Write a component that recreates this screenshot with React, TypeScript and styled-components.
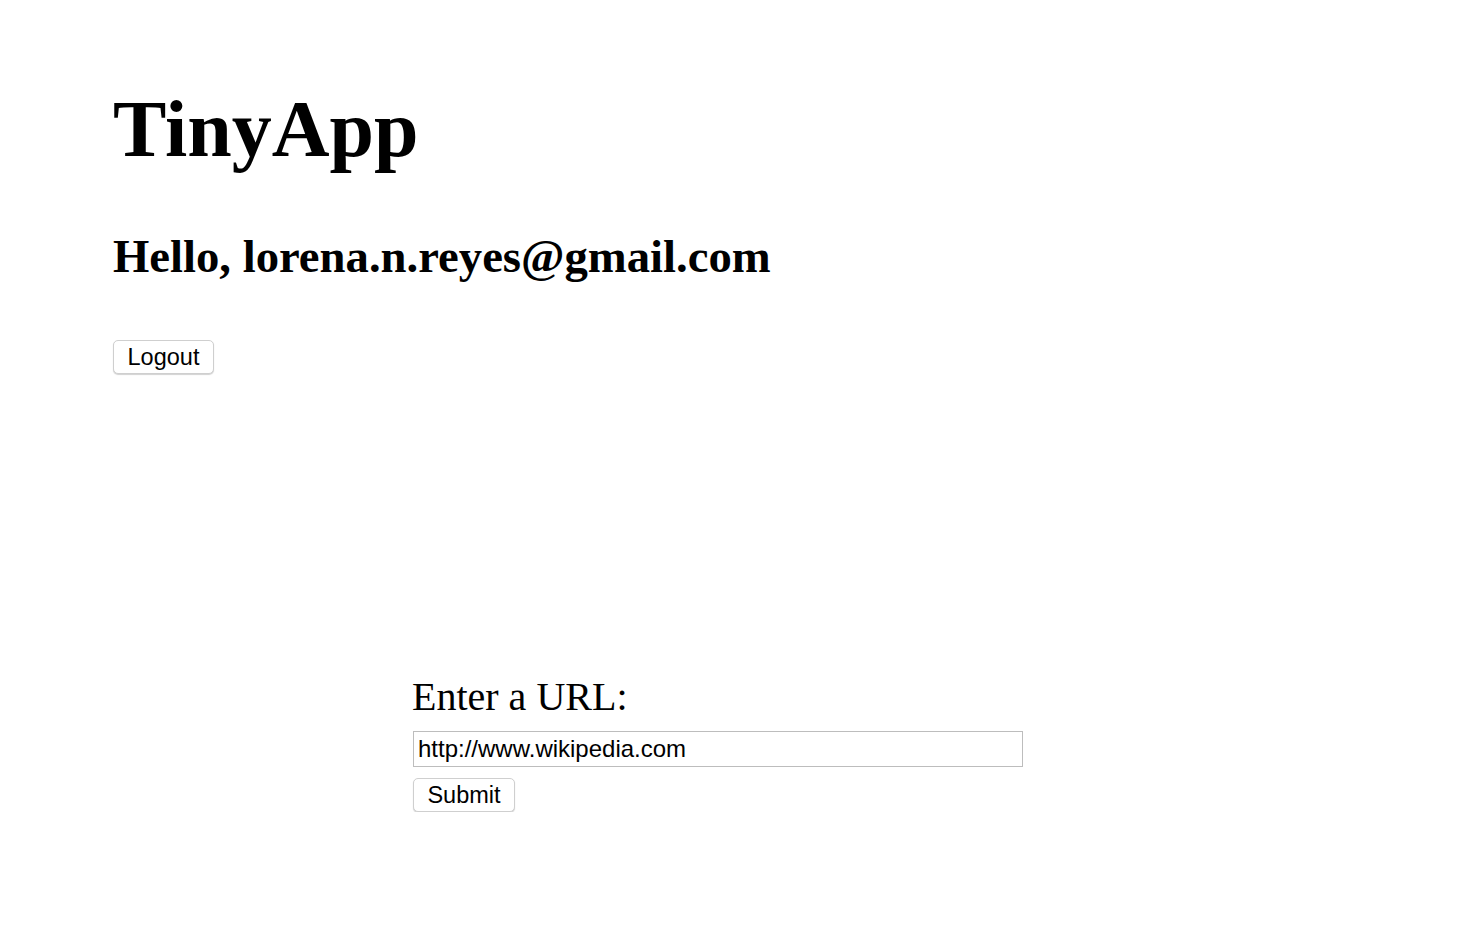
import React from "react";
import styled, { createGlobalStyle } from "styled-components";

const Global = createGlobalStyle`
  html, body { margin: 0; padding: 0; background: #fff; }
  body { font-family: "Liberation Serif", "Times New Roman", serif; color: #000; }
`;

const Page = styled.div`
  padding: 89px 0 0 113px;
`;

const Header = styled.header`
  display: flex;
  flex-direction: column;
  align-items: flex-start;
`;

const Title = styled.h1`
  margin: 0;
  font-size: 80px;
  font-weight: bold;
  line-height: 1;
`;

const Greeting = styled.h2`
  margin: 64px 0 0;
  font-size: 46.7px;
  font-weight: bold;
  line-height: 47px;
`;

const Button = styled.button`
  font-family: "Liberation Sans", Helvetica, Arial, sans-serif;
  font-size: 23.5px;
  color: #000;
  background: #fff;
  border: 1px solid #cfcfcf;
  border-radius: 5px;
  box-shadow: 0 1px 1px rgba(0, 0, 0, 0.18);
  height: 34px;
  padding: 0 12px;
  display: flex;
  align-items: center;
  justify-content: center;
  cursor: pointer;
`;

const LogoutButton = styled(Button)`
  margin-top: 60px;
  width: 101px;
`;

const Form = styled.form`
  margin: 303px 0 0 300px;
  display: flex;
  flex-direction: column;
  align-items: flex-start;
`;

const Label = styled.label`
  font-size: 40px;
  line-height: 1;
  margin-left: -1px;
`;

const UrlInput = styled.input`
  margin-top: 14px;
  width: 610px;
  height: 36px;
  box-sizing: border-box;
  border: 1px solid #bdbdbd;
  padding: 0 4px;
  font-family: "Liberation Sans", Helvetica, Arial, sans-serif;
  font-size: 24px;
  color: #000;
  outline: none;
`;

const SubmitButton = styled(Button)`
  margin-top: 11px;
  width: 102px;
`;

export default function App() {
  return (
    <>
      <Global />
      <Page>
        <Header>
          <Title>TinyApp</Title>
          <Greeting>Hello, lorena.n.reyes@gmail.com</Greeting>
          <LogoutButton type="button">Logout</LogoutButton>
        </Header>
        <Form onSubmit={(e) => e.preventDefault()}>
          <Label htmlFor="longURL">Enter a URL:</Label>
          <UrlInput id="longURL" type="text" defaultValue="http://www.wikipedia.com" />
          <SubmitButton type="submit">Submit</SubmitButton>
        </Form>
      </Page>
    </>
  );
}
